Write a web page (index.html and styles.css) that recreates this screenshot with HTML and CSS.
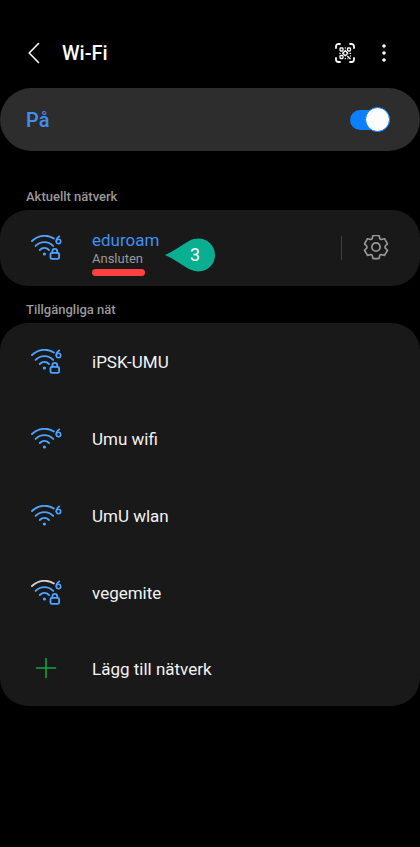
FILE: index.html
```html
<!DOCTYPE html>
<html lang="sv">
<head>
<meta charset="utf-8">
<meta name="viewport" content="width=device-width, initial-scale=1">
<title>Wi-Fi</title>
<link rel="stylesheet" href="styles.css">
</head>
<body>
<svg class="sprite" aria-hidden="true">
  <symbol id="waves" viewBox="0 0 32 22">
    <path class="outer" d="M2 6C8.5.1 17.500-.8 23.900 3.500"/>
    <path d="M5.600 10.900C10.800 5.900 18 5.900 23.200 10.900"/>
    <path d="M9.800 15C12.600 12.200 16.200 12.200 19 15"/>
    <circle class="dot" cx="14.400" cy="19" r="1.600"/>
    <circle class="six" cx="28.500" cy="6.500" r="2.200"/>
    <path class="six" d="M29.400 1.300C27.800 2.300 26.300 4.300 26.300 6.500"/>
  </symbol>
  <symbol id="lock" viewBox="0 0 32 26">
    <rect x="20.500" y="17.900" width="8.600" height="6" rx="1.400"/>
    <path d="M22.400 17.800V16.300a2.400 2.400 0 0 1 4.800 0V17.800"/>
  </symbol>
</svg>

<header class="topbar">
  <button class="icon-button back" type="button" aria-label="Tillbaka">
    <svg width="12" height="22" viewBox="0 0 12 22"><path d="M10.500 1.500L1.200 11L10.500 20.500"/></svg>
  </button>
  <h1>Wi-Fi</h1>
  <button class="icon-button qr" type="button" aria-label="Skanna QR-kod">
    <svg width="20" height="20" viewBox="0 0 20 20">
      <path d="M1 5V3.500A2.500 2.500 0 0 1 3.500 1H5M15 1h1.500A2.500 2.500 0 0 1 19 3.500V5M19 15v1.500A2.500 2.500 0 0 1 16.500 19H15M5 19H3.500A2.500 2.500 0 0 1 1 16.500V15"/>
      <g class="code"><rect x="5" y="5" width="3" height="3" rx=".8"/><rect x="12.500" y="5" width="3" height="3" rx=".8"/><rect x="5" y="12.500" width="3" height="3" rx=".8"/>
      <path d="M10.300 4.800v.2M10.300 7.300v.7M4.800 10.300h.4M7.600 10.300L10.300 7.800L12.800 10.300L10.300 12.800ZM15 10.300h.6M10.300 15.500v.2M12.500 13.300l2.800 2.400M15.500 13v.1M12.800 15.800h.1"/></g>
    </svg>
  </button>
  <button class="icon-button more" type="button" aria-label="Fler alternativ">
    <svg width="4" height="20" viewBox="0 0 4 20"><circle cx="2" cy="3" r="1.800"/><circle cx="2" cy="10" r="1.800"/><circle cx="2" cy="17" r="1.800"/></svg>
  </button>
</header>

<main>
  <div class="master">
    <label for="wifi-on">På</label>
    <input id="wifi-on" class="switch" type="checkbox" role="switch" checked>
  </div>

  <h2 class="first">Aktuellt nätverk</h2>
  <section class="card current">
    <button class="network" type="button">
      <span class="signal"><svg class="wifi" width="32" height="26"><use href="#waves" width="32" height="22"/><use href="#lock" width="32" height="26"/></svg></span>
      <span class="details">
        <span class="name">eduroam</span>
        <span class="status">Ansluten</span>
      </span>
    </button>
    <button class="settings" type="button" aria-label="Nätverksinställningar">
      <svg width="26" height="26" viewBox="-13.500 -12.500 27 27"><path d="M-3.100-12H3.100L4-8.600L5.450-7.760L8.840-8.680L11.940-3.320L9.450-.84V.84L11.940 3.320L8.840 8.680L5.450 7.760L4 8.600L3.100 12H-3.100L-4 8.600L-5.450 7.760L-8.840 8.680L-11.940 3.320L-9.450.84V-.84L-11.940-3.320L-8.840-8.680L-5.450-7.760L-4-8.600Z"/><circle r="4.300"/></svg>
    </button>
    <div class="callout">
      <svg width="51" height="34" viewBox="0 0 51 34"><path d="M0 17C9 13 17 7 24 3C37-4 50 5 50 17S37 38 24 31C17 27 9 21 0 17Z"/></svg>
      <span>3</span>
    </div>
  </section>

  <h2>Tillgängliga nät</h2>
  <section class="card">
    <button class="network" type="button">
      <span class="signal"><svg class="wifi" width="32" height="26"><use href="#waves" width="32" height="22"/><use href="#lock" width="32" height="26"/></svg></span>
      <span class="name">iPSK-UMU</span>
    </button>
    <button class="network" type="button">
      <span class="signal"><svg class="wifi" width="32" height="22"><use href="#waves" width="32" height="22"/></svg></span>
      <span class="name">Umu wifi</span>
    </button>
    <button class="network" type="button">
      <span class="signal"><svg class="wifi" width="32" height="22"><use href="#waves" width="32" height="22"/></svg></span>
      <span class="name">UmU wlan</span>
    </button>
    <button class="network" type="button">
      <span class="signal"><svg class="wifi weak" width="32" height="26"><use href="#waves" width="32" height="22"/><use href="#lock" width="32" height="26"/></svg></span>
      <span class="name">vegemite</span>
    </button>
    <button class="network add" type="button">
      <span class="signal"><svg class="plus" width="32" height="22" viewBox="0 0 32 22"><path d="M6.500 10H25.500M16 .5V19.500"/></svg></span>
      <span class="name">Lägg till nätverk</span>
    </button>
  </section>
</main>
</body>
</html>
```
FILE: styles.css
```css
* {
  box-sizing: border-box;
}

body {
  margin: 0;
  min-height: 100vh;
  background: #000;
  color: #f2f2f2;
  font-family: Roboto, "Liberation Sans", sans-serif;
}

button {
  margin: 0;
  padding: 0;
  border: 0;
  background: none;
  color: inherit;
  font: inherit;
  text-align: left;
  cursor: pointer;
}

svg {
  display: block;
  fill: none;
  stroke-linecap: round;
  stroke-linejoin: round;
}

.sprite {
  position: absolute;
  width: 0;
  height: 0;
}

.topbar {
  display: flex;
  align-items: center;
  height: 88px;
  padding: 18px 24px 0 18px;
}

.icon-button {
  display: flex;
  align-items: center;
  justify-content: center;
  height: 40px;
  width: 32px;
}

.back svg,
.qr svg {
  stroke: #fafafa;
  stroke-width: 1.6;
}

.qr svg {
  stroke-width: 1.8;
}

.qr .code {
  stroke-width: 1.3;
}

.more {
  width: 24px;
  margin-left: 11px;
}

.more svg {
  fill: #fafafa;
}

h1 {
  flex: 1;
  margin: 0 0 0 12px;
  font-size: 20px;
  line-height: 24px;
  font-weight: 500;
  color: #fafafa;
}

.master {
  display: flex;
  align-items: center;
  justify-content: space-between;
  height: 63px;
  padding: 0 30px 0 26px;
  border-radius: 32px;
  background: #2d2d2d;
}

.master label {
  font-size: 20px;
  line-height: 24px;
  font-weight: 500;
  color: #418ff2;
}

.switch {
  appearance: none;
  display: flex;
  align-items: center;
  justify-content: flex-end;
  width: 40px;
  height: 20px;
  margin: 0;
  border-radius: 10px;
  background: #0a80ff;
}

.switch::before {
  content: "";
  flex: none;
  width: 23px;
  height: 23px;
  border: 1px solid #0a80ff;
  border-radius: 50%;
  background: #fcfcfc;
}

h2 {
  margin: 16px 26px 5px;
  font-size: 13px;
  line-height: 16px;
  font-weight: 500;
  color: #999;
}

h2.first {
  margin-top: 38px;
}

.card {
  border-radius: 28px;
  background: #191919;
}

.network {
  display: flex;
  align-items: center;
  width: 100%;
  height: 77px;
  padding-left: 30px;
}

.network.add {
  height: 75px;
}

.signal {
  flex: none;
  width: 62px;
}

.name {
  font-size: 17px;
  line-height: 20px;
}

.wifi {
  --outer: #4da3ff;
  stroke: #4da3ff;
  stroke-width: 1.9;
}

.wifi.weak {
  --outer: #d2d2d2;
}

.outer {
  stroke: var(--outer);
}

.dot {
  fill: #4da3ff;
  stroke: none;
}

.six {
  stroke-width: 1.6;
}

.plus {
  stroke: #10a544;
  stroke-width: 1.6;
}

.current {
  position: relative;
  display: flex;
  align-items: center;
  height: 76px;
}

.current .network {
  flex: 1;
  height: 76px;
}

.details {
  position: relative;
  display: flex;
  flex-direction: column;
  padding-top: 2px;
}

.details::after {
  content: "";
  position: absolute;
  top: 41px;
  left: 0;
  width: 53px;
  height: 7px;
  border-radius: 4px;
  background: #ff4040;
}

.current .name {
  color: #418ff2;
}

.status {
  font-size: 13px;
  line-height: 18px;
  color: #999;
}

.settings {
  display: flex;
  align-items: center;
  height: 24px;
  padding: 0 31px 0 21px;
  border-left: 1px solid #404040;
}

.settings svg {
  stroke: #999;
  stroke-width: 1.7;
}

.callout {
  position: absolute;
  top: 28px;
  left: 165px;
  display: grid;
  align-items: center;
}

.callout svg,
.callout span {
  grid-area: 1 / 1;
}

.callout svg {
  fill: #0aaf91;
}

.callout span {
  padding-left: 25px;
  font-size: 18px;
  line-height: 20px;
  color: #fff;
}
```
